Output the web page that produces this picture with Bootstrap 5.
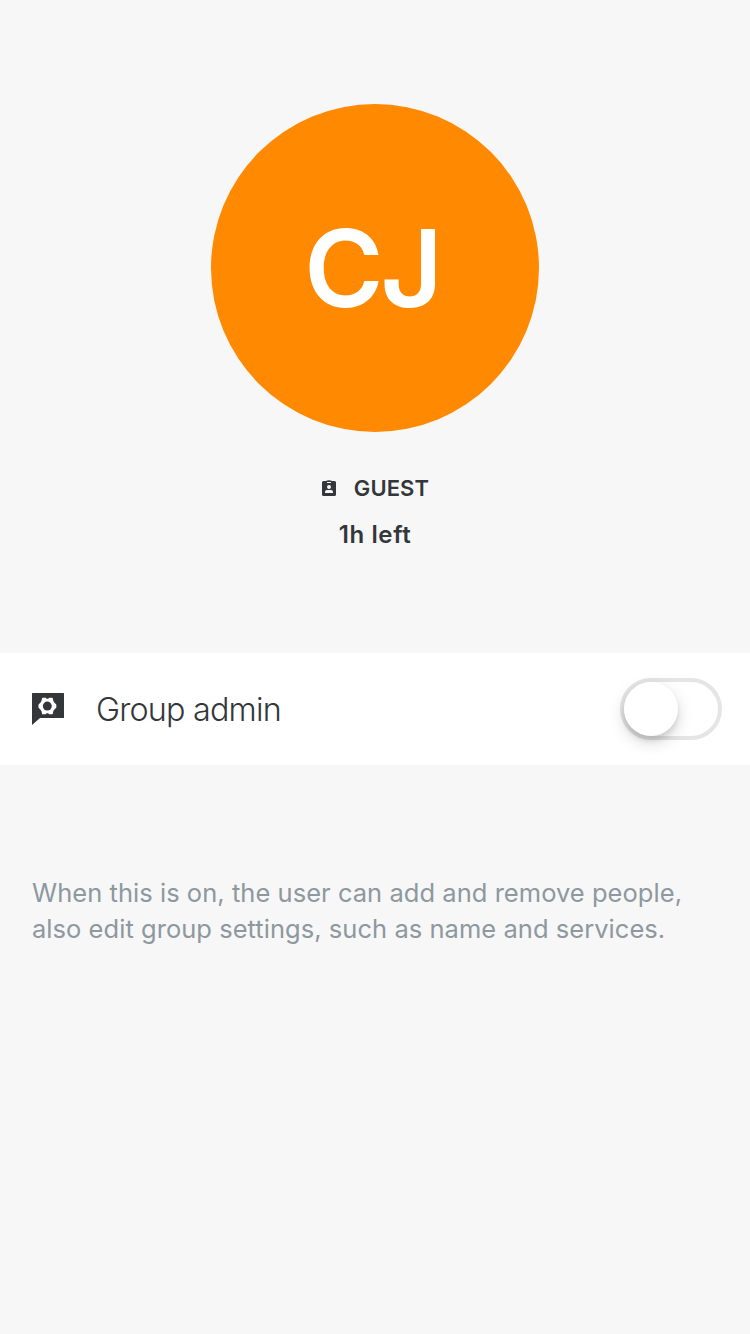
<!DOCTYPE html>
<html lang="en">
<head>
<meta charset="utf-8">
<meta name="viewport" content="width=device-width, initial-scale=1">
<title>Group participant</title>
<link href="https://cdn.jsdelivr.net/npm/bootstrap@5.3.0/dist/css/bootstrap.min.css" rel="stylesheet">
<style>
body{background:#f7f7f7;color:#33373a;font-family:Inter,"Liberation Sans",sans-serif}
.profile{height:653px;padding-top:104px}
.avatar{width:328px;height:328px;background:#ff8900;color:#fff;font-size:107.500px;font-weight:600;line-height:1}
.avatar span{letter-spacing:-3px;margin-right:6px;padding-top:2px}
.guest{margin-top:42px;height:28px;gap:17px;font-size:22px;font-weight:600;line-height:28px;letter-spacing:.1px}
.expires{margin-top:18px;font-size:24px;font-weight:600;line-height:30px;letter-spacing:.6px}
.option{height:112px;padding:0 28px 0 32px}
.option label{margin-left:32px;padding-top:1px;font-size:32.300px;font-weight:300;line-height:40px;letter-spacing:-.800px}
.form-check-input.toggle{width:102px;height:62px;border:4px solid #e5e5e5;border-radius:31px;background:#fff;appearance:none}
.switch-box{width:102px;height:62px}
.knob{left:4px;top:4px;width:54px;height:54px;background:#fff;box-shadow:0 6px 16px rgba(0,0,0,.17),0 5px 5px rgba(0,0,0,.08);pointer-events:none}
.hint{margin:110px 32px 0;color:#8d989f;font-size:25.500px;line-height:36px;letter-spacing:.040px}
.hint span{white-space:nowrap}
</style>
</head>
<body>
<main>
  <section class="profile d-flex flex-column align-items-center">
    <div class="avatar rounded-circle d-flex align-items-center justify-content-center"><span>CJ</span></div>
    <div class="guest d-flex align-items-center">
      <svg width="16" height="16" viewBox="0 0 16 16" aria-hidden="true"><path fill="#33373a" fill-rule="evenodd" d="M2.500 1H5a3.200 1.300 0 0 1 6 0h2.500Q15 1 15 2.500v12Q15 16 13.500 16h-11Q1 16 1 14.500v-12Q1 1 2.500 1ZM6 2v1h4V2ZM8 5a2 2 0 1 0 0 4 2 2 0 0 0 0-4ZM4 13h8v-1q0-2-2-2H6q-2 0-2 2Z"/></svg>
      <span>GUEST</span>
    </div>
    <div class="expires"><span>1h left</span></div>
  </section>
  <section class="option bg-white d-flex align-items-center">
    <svg width="32" height="32" viewBox="0 0 32 32" aria-hidden="true"><path fill="#33373a" d="M.5 0h31q.5 0 .5.5v24q0 .5-.5.5H8L0 32V.5Q0 0 .5 0Z"/><path fill="#fff" stroke="#fff" stroke-width="1.300" stroke-linejoin="round" d="M10.700 5.300h2.500l1.200 1.200h2l1.200-1.200h2.500l.7 3 1 1.500 1.900 2.200v2.200l-1.900 2-1 1.500-.7 3h-2.500l-1.200-1.200h-2l-1.200 1.200h-2.500l-.7-3-1-1.500-1.900-2v-2.200l1.900-2.200 1-1.500Z"/><circle cx="15.300" cy="13.100" r="4.500" fill="#33373a"/></svg>
    <label for="group-admin">Group admin</label>
    <div class="switch-box form-check form-switch position-relative ms-auto mb-0 p-0">
      <input class="form-check-input toggle m-0 float-none d-block" type="checkbox" role="switch" id="group-admin">
      <span class="knob position-absolute rounded-circle"></span>
    </div>
  </section>
  <p class="hint"><span>When this is on, the user can add and remove people,</span><br><span>also edit group settings, such as name and services.</span></p>
</main>
<script src="https://cdn.jsdelivr.net/npm/bootstrap@5.3.0/dist/js/bootstrap.bundle.min.js"></script>
</body>
</html>
